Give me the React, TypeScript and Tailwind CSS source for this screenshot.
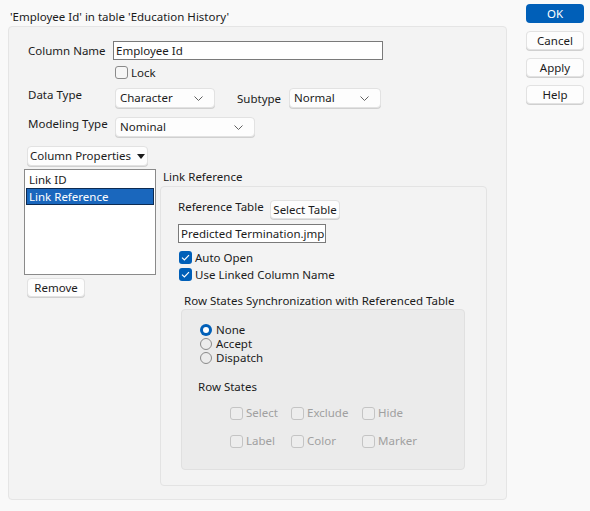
import type { ReactNode } from "react";

const font = { fontFamily: '"Noto Sans", "Open Sans", sans-serif' };

function Chevron() {
  return (
    <svg width="9" height="5" viewBox="0 0 9 5" className="shrink-0">
      <polyline points="0.5,0.5 4.5,4.5 8.5,0.5" fill="none" stroke="#606060" strokeWidth="1" />
    </svg>
  );
}

function Dropdown({ label, width }: { label: string; width: string }) {
  return (
    <div
      className={`flex h-[20px] ${width} items-center justify-between rounded-[4px] border border-[#e2e2e2] bg-[#fdfdfd] pl-[4px] pr-[11px] shadow-[0_1px_0_#d0d0d0]`}
    >
      <span>{label}</span>
      <Chevron />
    </div>
  );
}

function Button({ children, className = "" }: { children: ReactNode; className?: string }) {
  return (
    <div
      className={`flex items-center justify-center rounded-[4px] border border-[#e2e2e2] bg-[#fdfdfd] shadow-[0_1px_0_#d0d0d0] ${className}`}
    >
      {children}
    </div>
  );
}

function Check({ checked = false, disabled = false }: { checked?: boolean; disabled?: boolean }) {
  if (checked) {
    return (
      <span className="flex h-[13px] w-[13px] shrink-0 items-center justify-center rounded-[3px] bg-[#005fb8]">
        <svg width="9" height="7" viewBox="0 0 9 7">
          <polyline points="1,3.6 3.4,6 8,1.2" fill="none" stroke="white" strokeWidth="1.2" />
        </svg>
      </span>
    );
  }
  return (
    <span
      className={`h-[13px] w-[13px] shrink-0 rounded-[3px] border ${
        disabled ? "border-[#c4c4c4] bg-[#ededed]" : "border-[#8a8a8a] bg-[#f6f6f6]"
      }`}
    />
  );
}

function Radio({ checked = false }: { checked?: boolean }) {
  return checked ? (
    <span className="flex h-[12px] w-[12px] shrink-0 items-center justify-center rounded-full bg-[#005fb8]">
      <span className="h-[6px] w-[6px] rounded-full bg-white" />
    </span>
  ) : (
    <span className="h-[12px] w-[12px] shrink-0 rounded-full border border-[#8a8a8a] bg-[#ececec]" />
  );
}

function DisabledBox({ label }: { label: string }) {
  return (
    <div className="flex h-[16px] items-center gap-[3px] text-[#a0a0a0]">
      <Check disabled />
      <span>{label}</span>
    </div>
  );
}

export default function App() {
  return (
    <div
      className="flex h-[511px] w-[590px] whitespace-nowrap bg-[#f9f9f9] text-[11.5px] leading-[16px] text-[#1b1b1b]"
      style={font}
    >
      <div className="w-[507px] pl-[8px]">
        <div className="h-[26px] pl-[2px] pt-[9px]">'Employee Id' in table 'Education History'</div>

        <div className="h-[474px] w-[499px] rounded-[4px] border border-[#e5e5e5] bg-[#f3f3f3] pt-[14px]">
          <div className="flex h-[19px] items-center pl-[19px]">
            <span className="w-[85px]">Column Name</span>
            <div className="flex h-[19px] w-[270px] items-center border border-[#7a7a7a] bg-white px-[2px]">
              Employee Id
            </div>
          </div>

          <div className="mt-[6px] flex h-[13px] items-center gap-[3px] pl-[106px]">
            <Check />
            <span>Lock</span>
          </div>

          <div className="mt-[9px] flex items-start pl-[19px]">
            <span className="w-[87px] leading-[14px]">Data Type</span>
            <Dropdown label="Character" width="w-[100px]" />
            <span className="ml-[22px] w-[52px] pt-[3px] leading-[16px]">Subtype</span>
            <Dropdown label="Normal" width="w-[92px]" />
          </div>

          <div className="mt-[9px] flex items-start pl-[19px]">
            <span className="w-[87px] leading-[14px]">Modeling Type</span>
            <Dropdown label="Nominal" width="w-[140px]" />
          </div>

          <div className="mt-[9px] pl-[18px]">
            <Button className="h-[20px] w-[121px] gap-[6px]">
              <span>Column Properties</span>
              <svg width="8" height="5" viewBox="0 0 8 5">
                <polygon points="0,0 8,0 4,5" fill="#1b1b1b" />
              </svg>
            </Button>
          </div>

          <div className="mt-[3px] flex pl-[15px]">
            <div className="w-[132px]">
              <div className="h-[106px] w-[132px] border border-[#8a8a8a] bg-white p-[1px]">
                <div className="h-[17px] pl-[3px] leading-[17px]">Link ID</div>
                <div className="h-[17px] border border-[#0d2b52] bg-[#1a67bd] pl-[2px] leading-[15px] text-white">
                  Link Reference
                </div>
              </div>
              <div className="mt-[3px] pl-[3px]">
                <Button className="h-[19px] w-[58px]">Remove</Button>
              </div>
            </div>

            <div className="ml-[4px]">
              <div className="h-[17px] pl-[3px] leading-[16px]">Link Reference</div>
              <div className="h-[300px] w-[327px] rounded-[4px] border border-[#e3e3e3] bg-[#f3f3f3] pl-[17px] pt-[13px]">
                <div className="flex items-start">
                  <span className="w-[92px] leading-[14px]">Reference Table</span>
                  <Button className="h-[19px] w-[70px]">Select Table</Button>
                </div>
                <div className="mt-[5px] flex h-[19px] w-[148px] items-center border border-[#7a7a7a] bg-white px-[2px]">
                  Predicted Termination.jmp
                </div>
                <div className="mt-[8px] flex h-[13px] items-center gap-[3px] pl-[1px]">
                  <Check checked />
                  <span>Auto Open</span>
                </div>
                <div className="mt-[4px] flex h-[13px] items-center gap-[3px] pl-[1px]">
                  <Check checked />
                  <span>Use Linked Column Name</span>
                </div>

                <div className="mt-[12px] pl-[6px] leading-[16px]">
                  Row States Synchronization with Referenced Table
                </div>
                <div className="ml-[3px] h-[161px] w-[284px] rounded-[4px] border border-[#e0e0e0] bg-[#ebebeb] pl-[18px] pt-[13px]">
                  <div className="flex flex-col">
                    {[
                      { label: "None", on: true },
                      { label: "Accept", on: false },
                      { label: "Dispatch", on: false },
                    ].map((r) => (
                      <div key={r.label} className="flex h-[14px] items-center gap-[4px] leading-[14px]">
                        <Radio checked={r.on} />
                        <span>{r.label}</span>
                      </div>
                    ))}
                  </div>

                  <div className="-ml-[2px] mt-[14px] leading-[16px]">Row States</div>

                  <div className="mt-[10px] grid grid-cols-[61px_71px_auto] gap-y-[12px] pl-[30px]">
                    <DisabledBox label="Select" />
                    <DisabledBox label="Exclude" />
                    <DisabledBox label="Hide" />
                    <DisabledBox label="Label" />
                    <DisabledBox label="Color" />
                    <DisabledBox label="Marker" />
                  </div>
                </div>
              </div>
            </div>
          </div>
        </div>
      </div>

      <div className="ml-[19px] flex flex-col gap-[8px] pt-[4px]">
        <div className="flex h-[19px] w-[58px] items-center justify-center rounded-[4px] bg-[#005fb8] text-white">
          OK
        </div>
        <Button className="h-[19px] w-[58px]">Cancel</Button>
        <Button className="h-[19px] w-[58px]">Apply</Button>
        <Button className="h-[19px] w-[58px]">Help</Button>
      </div>
    </div>
  );
}
